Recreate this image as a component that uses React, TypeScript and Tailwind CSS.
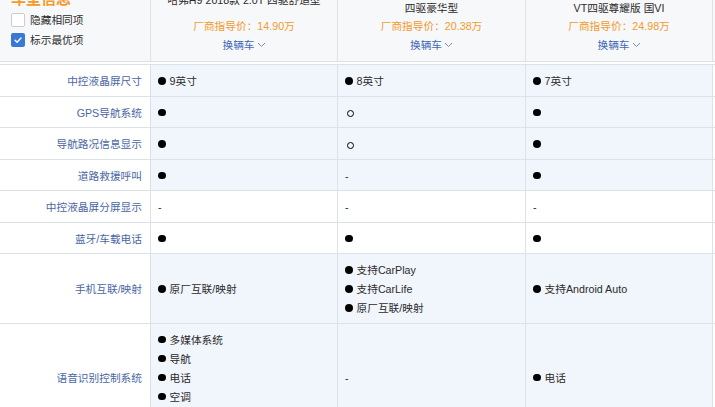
import React from "react";

type Val = { dot?: "full" | "hollow"; text?: string }[] | "-";

const rows: { label: string; hl: boolean; cells: Val[] }[] = [
  {
    label: "中控液晶屏尺寸",
    hl: true,
    cells: [[{ dot: "full", text: "9英寸" }], [{ dot: "full", text: "8英寸" }], [{ dot: "full", text: "7英寸" }]],
  },
  { label: "GPS导航系统", hl: true, cells: [[{ dot: "full" }], [{ dot: "hollow" }], [{ dot: "full" }]] },
  { label: "导航路况信息显示", hl: true, cells: [[{ dot: "full" }], [{ dot: "hollow" }], [{ dot: "full" }]] },
  { label: "道路救援呼叫", hl: true, cells: [[{ dot: "full" }], "-", [{ dot: "full" }]] },
  { label: "中控液晶屏分屏显示", hl: false, cells: ["-", "-", "-"] },
  { label: "蓝牙/车载电话", hl: false, cells: [[{ dot: "full" }], [{ dot: "full" }], [{ dot: "full" }]] },
  {
    label: "手机互联/映射",
    hl: true,
    cells: [
      [{ dot: "full", text: "原厂互联/映射" }],
      [
        { dot: "full", text: "支持CarPlay" },
        { dot: "full", text: "支持CarLife" },
        { dot: "full", text: "原厂互联/映射" },
      ],
      [{ dot: "full", text: "支持Android Auto" }],
    ],
  },
  {
    label: "语音识别控制系统",
    hl: true,
    cells: [
      [
        { dot: "full", text: "多媒体系统" },
        { dot: "full", text: "导航" },
        { dot: "full", text: "电话" },
        { dot: "full", text: "空调" },
        { dot: "full", text: "天窗" },
      ],
      "-",
      [{ dot: "full", text: "电话" }],
    ],
  },
];

const cars = [
  { name: ["哈弗H9 2018款 2.0T 四驱舒适型"], price: "14.90", pb: "pb-[8px]" },
  { name: ["哈弗H9 2018款 2.0T 汽油", "四驱豪华型"], price: "20.38", pb: "pb-0" },
  { name: ["哈弗H9 2018款 2.0T 汽油", "VT四驱尊耀版 国VI"], price: "24.98", pb: "pb-0" },
];

function Cell({ v }: { v: Val }) {
  if (v === "-") return <div className="leading-[19px]">-</div>;
  return (
    <div className="flex flex-col">
      {v.map((it, i) => (
        <div key={i} className="flex items-center leading-[19px]">
          {it.dot === "full" ? (
            <span className="mb-[2px] h-[7.5px] w-[7.5px] rounded-full bg-black" />
          ) : (
            <span className="ml-[2px] mt-[1px] h-[7px] w-[7px] rounded-full border border-black" />
          )}
          {it.text && <span className="ml-[4px]">{it.text}</span>}
        </div>
      ))}
    </div>
  );
}

export default function App() {
  return (
    <div
      className="h-[407px] w-[715px] overflow-hidden bg-white text-[10.7px] text-[#2b2b2b]"
      style={{ fontFamily: '"Liberation Sans", "Noto Sans CJK SC", sans-serif' }}
    >
      <div className="grid h-[62px] grid-cols-[151px_187px_188px_187px] overflow-hidden border-b border-[#dde1e8] bg-[#f7f8fa]">
        <div className="border-r border-[#dde1e8] pl-[11px]">
          <div className="-mt-[11px] text-[15px] font-bold leading-[20px] text-[#f39a2b]">车型信息</div>
          <div className="mt-[1px] flex items-center gap-[5px] leading-[20px]">
            <span className="h-[14px] w-[14px] rounded-[2px] border border-[#c8ccd3] bg-white" />
            <span>隐藏相同项</span>
          </div>
          <div className="flex items-center gap-[5px] leading-[20px]">
            <span className="flex h-[14px] w-[14px] items-center justify-center rounded-[2px] bg-[#3a78d6]">
              <svg width="10" height="10" viewBox="0 0 12 12" fill="none">
                <path d="M2.5 6.2l2.4 2.4 4.7-5" stroke="white" strokeWidth="1.7" strokeLinecap="round" strokeLinejoin="round" />
              </svg>
            </span>
            <span>标示最优项</span>
          </div>
        </div>
        {cars.map((c, i) => (
          <div key={i} className="flex flex-col items-center border-r border-[#dde1e8]">
            <div className={`-mt-[18px] flex h-[35px] flex-col items-center justify-end ${c.pb}`}>
              {c.name.map((n, j) => (
                <div key={j} className="whitespace-nowrap leading-[18px]">
                  {n}
                </div>
              ))}
            </div>
            <div className="leading-[18px] text-[#f39a2b]">厂商指导价：{c.price}万</div>
            <div className="mt-[1px] flex items-center gap-[2px] leading-[18px] text-[#3f69b8]">
              换辆车
              <svg width="9" height="6" viewBox="0 0 9 6" fill="none">
                <path d="M1 1l3.5 3.5L8 1" stroke="#6f8cc8" strokeWidth="1" />
              </svg>
            </div>
          </div>
        ))}
      </div>
      <div className="mt-[2px] border-t border-[#dde1e8]">
        {rows.map((r, i) => (
          <div key={i} className="grid grid-cols-[151px_187px_188px_187px] border-b border-[#dde1e8]">
            <div className="flex items-center justify-end border-r border-[#dde1e8] pb-[4.25px] pr-[8px] pt-[7.25px] leading-[19px] text-[#4a67a3]">
              {r.label}
            </div>
            {r.cells.map((v, j) => (
              <div
                key={j}
                className={`flex items-center border-r border-[#dde1e8] pb-[4.25px] pl-[7px] pt-[7.25px] ${r.hl ? "bg-[#f1f5fc]" : "bg-white"}`}
              >
                <Cell v={v} />
              </div>
            ))}
          </div>
        ))}
      </div>
    </div>
  );
}
